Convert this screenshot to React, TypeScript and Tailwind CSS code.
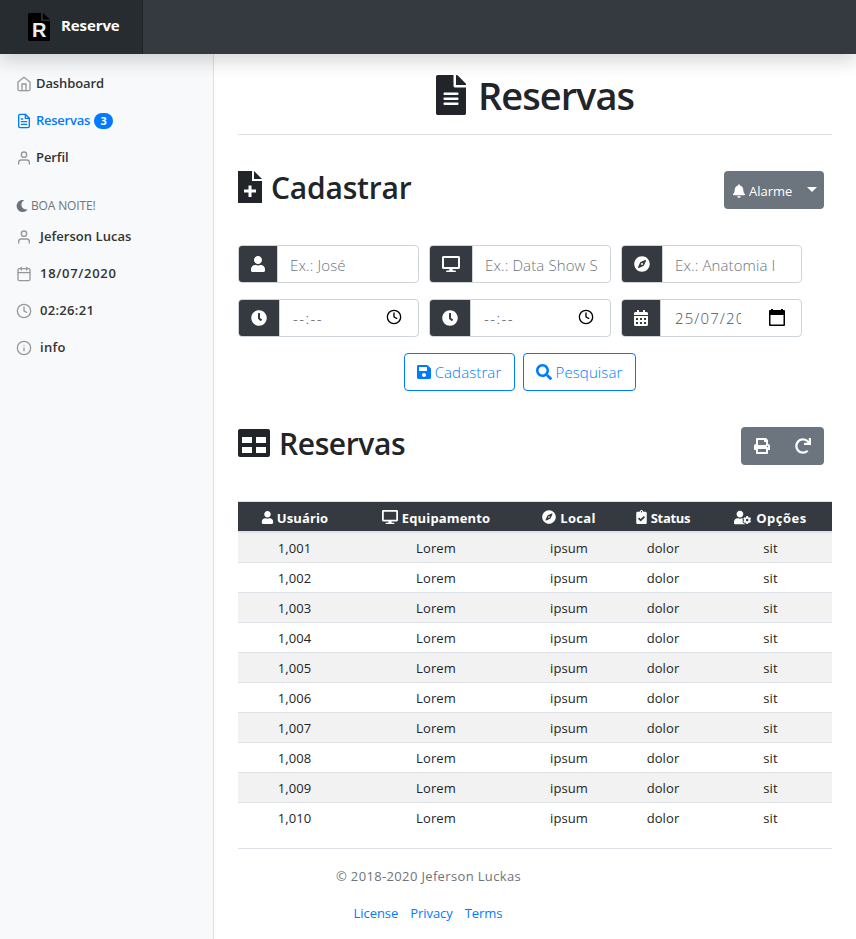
import type { ReactNode } from 'react';
import {
  FaFileAlt, FaUser, FaDesktop, FaCompass, FaClock, FaCalendarAlt, FaSave, FaSearch, FaBell,
  FaPrint, FaRedo, FaClipboardCheck, FaUserCog, FaMoon,
} from 'react-icons/fa';
import { FiHome, FiFileText, FiUser, FiCalendar, FiClock, FiInfo } from 'react-icons/fi';

function FilePlus() {
  return (
    <svg viewBox="0 0 24 32" className="h-8 w-6 shrink-0" fill="currentColor">
      <path fillRule="evenodd" d="M0 0H14V10H24V32H0ZM10.500 14.500V18.500H6V21.500H10.500V26H13.500V21.500H18V18.500H13.500V14.500Z" />
      <path d="M16 0L24 8H16Z" />
    </svg>
  );
}

function TableGrid() {
  return (
    <svg viewBox="0 0 32 28" className="h-7 w-8 shrink-0" fill="currentColor">
      <path fillRule="evenodd" d="M2 0H30Q32 0 32 2V26Q32 28 30 28H2Q0 28 0 26V2Q0 0 2 0ZM4 8V14H14V8ZM18 8V14H28V8ZM4 18V24H14V18ZM18 18V24H28V18Z" />
    </svg>
  );
}

function Logo() {
  return (
    <div className="relative h-7 w-[22px] shrink-0">
      <svg viewBox="0 0 22 28" className="h-7 w-[22px]">
        <path d="M1.500 0H13V8H22V26.500Q22 28 20.500 28H1.500Q0 28 0 26.500V1.500Q0 0 1.500 0Z" fill="#000" />
        <path d="M15 0L22 6.500H15Z" fill="#000" />
      </svg>
      <span className="absolute left-1 top-[7px] text-[20px] font-bold leading-[20px] text-[#eee] font-['Liberation_Sans',sans-serif]">R</span>
    </div>
  );
}

function NavItem({ icon, children, active, info, tracking = 'tracking-[-0.1px]' }: { icon: ReactNode; children: ReactNode; active?: boolean; info?: boolean; tracking?: string }) {
  return (
    <li className={`flex h-[37px] items-center pl-4 text-[13px] font-semibold ${tracking} ${active ? 'text-[#007bff]' : 'text-[#333]'}`}>
      <span className={`mt-px w-4 text-base ${active ? 'text-[#007bff]' : 'text-[#999]'} ${info ? 'mr-2' : 'mr-1'}`}>{icon}</span>
      {children}
    </li>
  );
}

function Field({ icon, addon, children }: { icon: ReactNode; addon: string; children: ReactNode }) {
  return (
    <div className="flex h-[38px] overflow-hidden rounded border border-[#ced4da] bg-white">
      <span className={`flex shrink-0 items-center justify-center border-r border-[#ced4da] bg-[#343a40] text-base text-white ${addon}`}>{icon}</span>
      {children}
    </div>
  );
}

const inputClass = 'min-w-0 flex-1 bg-transparent pl-3 pr-2 pt-0.5 text-[15px] font-light tracking-[0.12px] text-[#495057] outline-none placeholder:text-[#6c757d] placeholder:opacity-100';

function TimeField() {
  return (
    <Field addon="w-[41px]" icon={<FaClock />}>
      <div className="flex flex-1 items-center justify-between pl-[13px] pr-4 text-[15px] font-light text-[#495057]">
        <span className="tracking-[1.4px]">--:--</span>
        <FiClock className="mb-0.5 text-base text-black" />
      </div>
    </Field>
  );
}

const columns = [
  { label: 'Usuário', icon: <FaUser className="text-[13px]" />, width: 'w-[113px]', tracking: 'tracking-[0.1px]' },
  { label: 'Equipamento', icon: <FaDesktop className="mr-px text-base" />, width: 'w-[170px]', tracking: 'tracking-[0.15px]' },
  { label: 'Local', icon: <FaCompass className="mr-px text-sm" />, width: 'w-[96px]', tracking: 'tracking-[0.3px]' },
  { label: 'Status', icon: <FaClipboardCheck className="mr-px w-[11px] text-sm" />, width: 'w-[92px]', tracking: 'tracking-[-0.3px]' },
  { label: 'Opções', icon: <FaUserCog className="mr-0.5 text-[17px]" />, width: 'w-[123px]', tracking: 'tracking-[0.5px]' },
];

const rows = ['1,001', '1,002', '1,003', '1,004', '1,005', '1,006', '1,007', '1,008', '1,009', '1,010'];

export default function App() {
  return (
    <div className="flex h-[939px] w-[856px] flex-col overflow-hidden bg-white text-[#212529] font-['Open_Sans','Noto_Sans',sans-serif]">
      <header className="relative z-10 flex h-[54px] shrink-0 bg-[#343a40] shadow-[0_8px_16px_rgba(0,0,0,0.15)]">
        <a className="flex w-[143px] items-center border-r border-[#1f2326] bg-[#272c30] pl-7 text-[15px] font-bold tracking-[-0.1px] text-white">
          <Logo />
          <span className="mb-1 ml-[11px]">Reserve</span>
        </a>
      </header>
      <div className="flex flex-1">
        <nav className="w-[214px] shrink-0 border-r border-[#dfe0e1] bg-[#f8f9fa] pt-[11px]">
          <ul>
            <NavItem icon={<FiHome />}>Dashboard</NavItem>
            <NavItem icon={<FiFileText />} active tracking="tracking-[-0.25px]">
              Reservas
              <span className="ml-1 mt-px flex h-4 w-[19px] items-center justify-center rounded-full bg-[#007bff] text-[11px] font-bold text-white">3</span>
            </NavItem>
            <NavItem icon={<FiUser />}>Perfil</NavItem>
          </ul>
          <h6 className="mt-5 flex h-5 items-center pl-4 text-xs tracking-[-0.15px] text-[#6c757d]">
            <FaMoon className="mr-[3px] text-xs" />BOA NOITE!
          </h6>
          <ul className="mt-0.5">
            <NavItem info icon={<FiUser />} tracking="tracking-[0.05px]">Jeferson Lucas</NavItem>
            <NavItem info icon={<FiCalendar />} tracking="tracking-[0.7px]">18/07/2020</NavItem>
            <NavItem info icon={<FiClock />} tracking="tracking-[0.3px]">02:26:21</NavItem>
            <NavItem info icon={<FiInfo />} tracking="tracking-[0.3px]">info</NavItem>
          </ul>
        </nav>
        <main className="flex-1 pl-6 pr-6">
          <div className="flex h-[81px] items-center justify-center border-b border-[#dee2e6] pt-px">
            <FaFileAlt className="mr-3 h-10 w-[30px]" />
            <h1 className="text-[38px] font-semibold leading-none tracking-[-0.95px]">Reservas</h1>
          </div>
          <div className="flex items-start justify-between pr-2 pt-9">
            <h2 className="flex h-8 items-center text-[30px] font-semibold tracking-[-0.2px]">
              <FilePlus /><span className="ml-[9px] mt-px">Cadastrar</span>
            </h2>
            <button className="flex h-[38px] w-[100px] items-center rounded bg-[#6c757d] pl-[9px] pt-0.5 text-[13px] text-white">
              <FaBell className="w-3 text-sm" />
              <span className="ml-1 mt-0.5">Alarme</span>
              <span className="mb-1 ml-auto mr-[7px] border-x-[5px] border-t-[5px] border-x-transparent border-t-white" />
            </button>
          </div>
          <div className="mt-9 grid grid-cols-[181px_182px_181px] gap-x-2.5 gap-y-4">
            <Field addon="w-[39px]" icon={<FaUser />}>
              <input className={inputClass} placeholder="Ex.: José" />
            </Field>
            <Field addon="w-[43px]" icon={<FaDesktop className="text-[18px]" />}>
              <input className={inputClass} placeholder="Ex.: Data Show S" />
            </Field>
            <Field addon="w-[41px]" icon={<FaCompass />}>
              <input className={inputClass} placeholder="Ex.: Anatomia I" />
            </Field>
            <TimeField />
            <TimeField />
            <Field addon="w-[39px]" icon={<FaCalendarAlt />}>
              <div className="flex flex-1 items-center justify-between pl-3.5 pr-4 text-[15px] font-light text-[#495057]">
                <span className="w-[66px] overflow-hidden whitespace-nowrap tracking-[1.1px]">25/07/2020</span>
                <svg viewBox="0 0 16 18" className="h-[18px] w-4 text-black" fill="currentColor">
                  <path fillRule="evenodd" d="M2 1V0H4V1H12V0H14V1H15Q16 1 16 2V16Q16 17 15 17H1Q0 17 0 16V2Q0 1 1 1ZM1.500 6V15.500H14.500V6Z" />
                </svg>
              </div>
            </Field>
          </div>
          <div className="mt-4 flex gap-2 pl-[166px] text-[15px] font-light tracking-[0.1px] text-[#007bff]">
            <button className="flex h-[38px] w-[111px] items-center justify-center gap-1 rounded border border-[#007bff] pr-px">
              <FaSave className="w-3.5 text-base" />Cadastrar
            </button>
            <button className="flex h-[38px] w-[113px] items-center justify-center gap-1 rounded border border-[#007bff] pr-px">
              <FaSearch className="text-base" />Pesquisar
            </button>
          </div>
          <div className="mt-9 flex items-start justify-between pr-2">
            <h2 className="flex h-8 items-center text-[30px] font-semibold tracking-[-0.4px]">
              <TableGrid /><span className="ml-[9px] mt-px">Reservas</span>
            </h2>
            <div className="flex h-[38px] w-[83px] items-center justify-center gap-[25px] rounded bg-[#6c757d] text-base text-white">
              <FaPrint /><FaRedo />
            </div>
          </div>
          <table className="mt-9 w-full table-fixed border-separate border-spacing-0 text-center text-[13px]">
            <thead>
              <tr className="h-8 bg-[#343a40] text-white">
                {columns.map((c) => (
                  <th key={c.label} className={`h-8 border-b-2 border-t border-[#dee2e6] p-0 pt-px font-bold ${c.width} ${c.tracking}`}>
                    <span className="flex items-center justify-center gap-[3px]">{c.icon}<span className="pt-px leading-[18px]">{c.label}</span></span>
                  </th>
                ))}
              </tr>
            </thead>
            <tbody>
              {rows.map((id, i) => (
                <tr key={id} className="odd:bg-[#f2f2f2]">
                  {[id, 'Lorem', 'ipsum', 'dolor', 'sit'].map((v) => (
                    <td key={v} className={`h-[30px] p-0 pt-0.5 tracking-[0.1px] ${i < rows.length - 1 ? 'border-b border-[#dee2e6]' : ''}`}>{v}</td>
                  ))}
                </tr>
              ))}
            </tbody>
          </table>
          <footer className="mt-[15px] border-t border-[#dee2e6] pr-[213px] pt-[17px] text-center text-[13px]">
            <p className="leading-5 tracking-[0.35px] text-[#6c757d]">© 2018-2020 Jeferson Luckas</p>
            <div className="mt-[17px] flex justify-center gap-3 pr-px leading-5 tracking-[-0.06px] text-[#007bff]">
              <a>License</a><a>Privacy</a><a>Terms</a>
            </div>
          </footer>
        </main>
      </div>
    </div>
  );
}
